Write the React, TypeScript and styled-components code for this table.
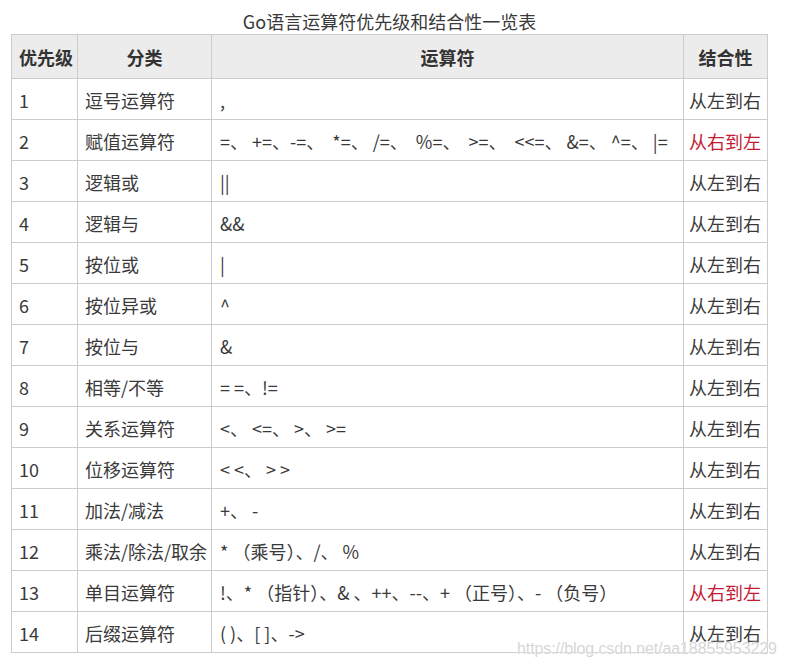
import React from "react";
import styled, { createGlobalStyle } from "styled-components";

const Global = createGlobalStyle`
  html, body { margin: 0; padding: 0; background: #fff; }
  body { font-family: "Noto Sans CJK SC", "Liberation Sans", sans-serif; color: #333; }
`;

const Page = styled.div`
  position: relative;
  width: 788px;
  height: 668px;
  padding: 8px 0 0 11px;
  box-sizing: border-box;
`;

const Table = styled.table`
  border-collapse: collapse;
  table-layout: fixed;
  width: 756px;
  font-size: 18px;
  color: #3a3a3a;
`;

const Caption = styled.caption`
  font-size: 18px;
  line-height: 26px;
  height: 26px;
  color: #3a3a3a;
  text-align: center;
  white-space: nowrap;
`;

const HeadCell = styled.th`
  height: 44px;
  padding: 0 7px;
  background: #ececec;
  border: 1px solid #cccccc;
  font-weight: 700;
  color: #333;
  text-align: center;
  vertical-align: middle;
  box-sizing: border-box;
  white-space: nowrap;
`;

const Cell = styled.td<{ $red?: boolean; $pad?: number }>`
  height: 41px;
  padding: 2px 0 0 ${(p) => p.$pad ?? 7}px;
  border: 1px solid #cccccc;
  color: ${(p) => (p.$red ? "#c41a33" : "#3a3a3a")};
  text-align: left;
  vertical-align: middle;
  box-sizing: border-box;
  white-space: pre;
  overflow: hidden;
`;

const Watermark = styled.div`
  position: absolute;
  left: 517px;
  top: 639px;
  font-family: "Liberation Sans", Arial, sans-serif;
  font-size: 16px;
  letter-spacing: -0.1px;
  line-height: 20px;
  color: rgba(200, 200, 200, 0.75);
  text-shadow: 0 0 2px #fff, 0 0 1px #fff;
  white-space: nowrap;
  pointer-events: none;
`;

type Row = { p: string; c: string; op: string; red?: boolean };

const rows: Row[] = [
  { p: "1", c: "逗号运算符", op: "," },
  { p: "2", c: "赋值运算符", op: "=、 +=、-=、  *=、 /=、  %=、  >=、  <<=、 &=、 ^=、 |=", red: true },
  { p: "3", c: "逻辑或", op: "||" },
  { p: "4", c: "逻辑与", op: "&&" },
  { p: "5", c: "按位或", op: "|" },
  { p: "6", c: "按位异或", op: "^" },
  { p: "7", c: "按位与", op: "&" },
  { p: "8", c: "相等/不等", op: "= =、!=" },
  { p: "9", c: "关系运算符", op: "<、 <=、 >、 >=" },
  { p: "10", c: "位移运算符", op: "< <、 > >" },
  { p: "11", c: "加法/减法", op: "+、 -" },
  { p: "12", c: "乘法/除法/取余", op: "* （乘号）、/、 %" },
  { p: "13", c: "单目运算符", op: "!、* （指针）、& 、++、--、+ （正号）、- （负号）", red: true },
  { p: "14", c: "后缀运算符", op: "( )、[ ]、->" },
];

export default function App() {
  return (
    <>
      <Global />
      <Page>
        <Table>
          <Caption>Go语言运算符优先级和结合性一览表</Caption>
          <colgroup>
            <col style={{ width: 66 }} />
            <col style={{ width: 134 }} />
            <col style={{ width: 472 }} />
            <col style={{ width: 84 }} />
          </colgroup>
          <thead>
            <tr>
              <HeadCell>优先级</HeadCell>
              <HeadCell>分类</HeadCell>
              <HeadCell>运算符</HeadCell>
              <HeadCell>结合性</HeadCell>
            </tr>
          </thead>
          <tbody>
            {rows.map((r) => (
              <tr key={r.p}>
                <Cell>{r.p}</Cell>
                <Cell>{r.c}</Cell>
                <Cell $pad={8}>{r.op}</Cell>
                <Cell $pad={5} $red={r.red}>{r.red ? "从右到左" : "从左到右"}</Cell>
              </tr>
            ))}
          </tbody>
        </Table>
        <Watermark>https://blog.csdn.net/aa18855953229</Watermark>
      </Page>
    </>
  );
}
